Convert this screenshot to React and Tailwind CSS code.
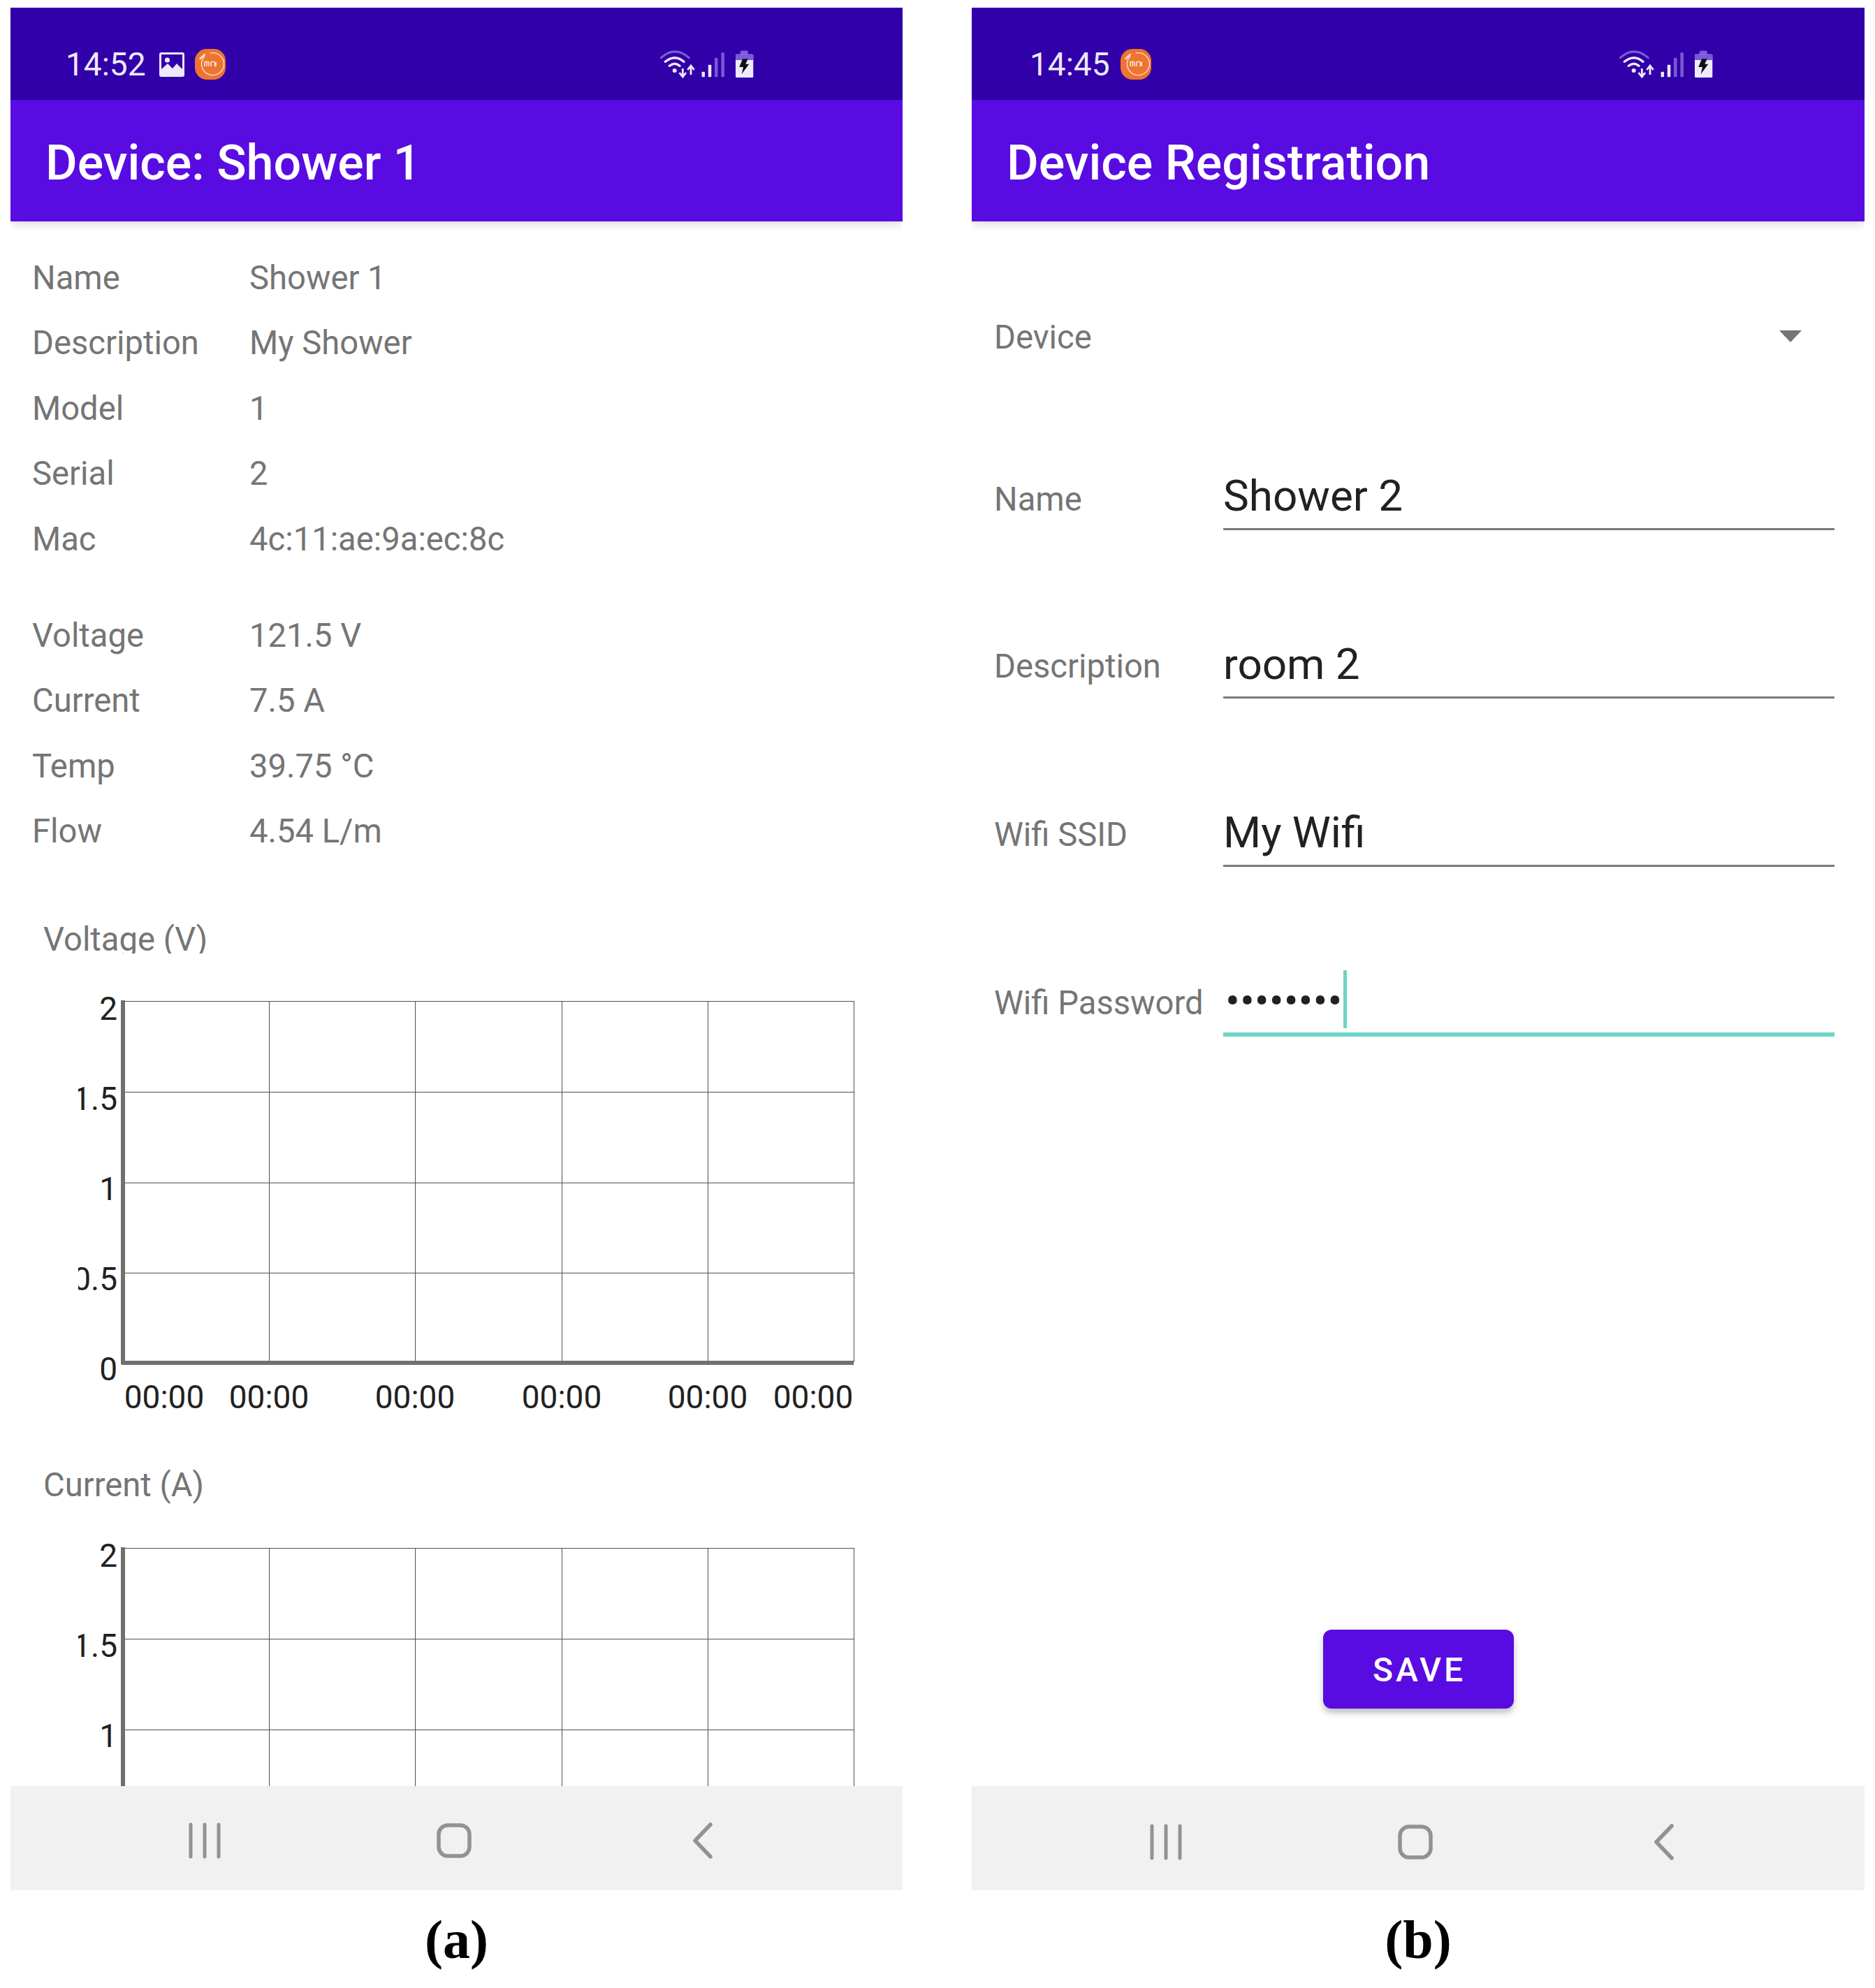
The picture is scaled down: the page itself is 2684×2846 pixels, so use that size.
const font = { fontFamily: "Roboto, sans-serif" };

function ImageIcon() {
  return (
    <svg width="36" height="35" viewBox="0 0 36 35" className="ml-[19px] shrink-0">
      <rect x="0" y="0" width="36" height="35" rx="3" fill="#eee8fb" />
      <rect x="3" y="3" width="30" height="29" fill="#3100a8" />
      <circle cx="11.5" cy="11" r="3.6" fill="#eee8fb" />
      <path d="M3 32 V24 L12 16 L19 23 L25 16 L33 24 V32 Z" fill="#eee8fb" />
    </svg>
  );
}

function MiIcon({ className }) {
  return (
    <svg width="44" height="44" viewBox="0 0 44 44" className={className}>
      <rect x="0" y="0" width="44" height="44" rx="17" fill="#ee7530" />
      <path d="M14 10.5 A16 16 0 1 0 22 6" fill="none" stroke="#fbe3d3" strokeWidth="1.3" />
      <path d="M7.5 14 L14 8" stroke="#fbe3d3" strokeWidth="2.4" strokeLinecap="round" />
      <path d="M15 26 V19.5 H20 Q21 19.5 21 21 V26 M18 20 V26 M24 19.5 H28 Q29.5 19.5 29.5 21 V26 M24 19.5 V26 M31 19.5 V26" transform="translate(-1 -1)" fill="none" stroke="#fbe3d3" strokeWidth="1.6" />
    </svg>
  );
}

function StatusRight() {
  const light = "#efe9fb";
  const dim = "#7a5ad8";
  return (
    <svg width="134" height="40" viewBox="0 -1 134 40" className="shrink-0">
      <path d="M1.3 9.7 Q21 -8 41.3 9.7" fill="none" stroke={dim} strokeWidth="3" strokeLinecap="round" />
      <path d="M7.3 15.3 Q21 4 34 15.3" fill="none" stroke={light} strokeWidth="3.4" strokeLinecap="round" />
      <path d="M13.3 21.3 Q21 15 28 21.3" fill="none" stroke={light} strokeWidth="3.4" strokeLinecap="round" />
      <circle cx="20.7" cy="28" r="3" fill={light} />
      <path d="M32.3 25 V35 M27.5 31 L32.3 37 L37 31" fill="none" stroke={light} strokeWidth="2.8" />
      <path d="M44 34 V22 M39.3 27 L44 21 L48.7 27" fill="none" stroke={light} strokeWidth="2.8" />
      <rect x="59.5" y="29.7" width="4.5" height="7.6" rx="1" fill={light} />
      <rect x="68.8" y="19.7" width="4.5" height="17.6" rx="1" fill={light} />
      <rect x="78" y="9.7" width="4.5" height="27.6" rx="1" fill={dim} />
      <rect x="87.4" y="2.3" width="4.5" height="35" rx="1" fill={dim} />
      <rect x="114.7" y="-0.5" width="11" height="6" rx="1.5" fill={dim} />
      <rect x="108" y="4.7" width="25.3" height="33.3" rx="1.5" fill={light} />
      <path d="M108 13 V6 Q108 4.7 109.5 4.7 H131.8 Q133.3 4.7 133.3 6 V13 Z" fill={dim} />
      <path d="M118 11.3 H125.7 L122.3 18.7 H127.3 L116.7 33 L119 23 H113.3 Z" fill="#111" />
    </svg>
  );
}

function StatusBar({ time, pl, pr, micon, image }) {
  return (
    <div className={`h-[132px] pt-[30px] bg-[#3100a8] flex items-center shrink-0 ${pl} ${pr}`}>
      <span className="text-[46px] leading-none text-[#eee8fb]" style={font}>{time}</span>
      {image && <ImageIcon />}
      <MiIcon className={`shrink-0 ${micon}`} />
      <div className="ml-auto"><StatusRight /></div>
    </div>
  );
}

function AppBar({ title, pl }) {
  return (
    <div className={`relative z-10 h-[174px] pt-[6px] shrink-0 bg-[#590ce1] flex items-center shadow-[0_4px_12px_rgba(0,0,0,0.14)] ${pl}`}>
      <h1 className="text-[70px] leading-none font-medium text-white" style={font}>{title}</h1>
    </div>
  );
}

function NavBar({ pt }) {
  return (
    <div className={`relative z-10 h-[149px] shrink-0 bg-[#f1f1f1] flex items-start pl-[248px] gap-[297px] ${pt}`}>
      <svg width="60" height="52" viewBox="0 0 60 52">
        <path d="M10 3 V49 M30 3 V49 M50 3 V49" stroke="#929292" strokeWidth="5" strokeLinecap="round" fill="none" />
      </svg>
      <svg width="60" height="52" viewBox="0 0 60 52">
        <rect x="8" y="4" width="44" height="44" rx="13" fill="none" stroke="#929292" strokeWidth="5.5" />
      </svg>
      <svg width="60" height="52" viewBox="0 0 60 52">
        <path d="M42 3 L20 26 L42 49" transform="translate(-2 0)" stroke="#929292" strokeWidth="5.5" strokeLinecap="round" strokeLinejoin="round" fill="none" />
      </svg>
    </div>
  );
}

function Chart({ className }) {
  const xs = [64, 273, 482, 692, 901, 1110];
  const ys = [13, 143, 273, 402, 530];
  const ylab = [["2", 40], ["1.5", 169], ["1", 298], ["0.5", 427], ["0", 556]];
  const xlab = [123, 273, 482, 692, 901, 1052];
  return (
    <svg width="1150" height="620" viewBox="0 0 1150 620" className={`block shrink-0 ml-[97px] ${className}`} style={font}>
      {ys.map((y) => <line key={y} x1="64" x2="1110" y1={y + 0.5} y2={y + 0.5} stroke="#4f4f4f" strokeWidth="1" />)}
      {xs.slice(1).map((x) => <line key={x} x1={x + 0.5} x2={x + 0.5} y1="13" y2="530" stroke="#4f4f4f" strokeWidth="1" />)}
      <line x1="64" x2="64" y1="12" y2="533" stroke="#707070" strokeWidth="6" />
      <line x1="62" x2="1110" y1="531" y2="531" stroke="#707070" strokeWidth="6" />
      {ylab.map(([t, y]) => <text key={t} x="56" y={y} textAnchor="end" fontSize="46" fill="#212121">{t}</text>)}
      {xlab.map((x, i) => <text key={i} x={x} y="596" textAnchor="middle" fontSize="46" fill="#212121">00:00</text>)}
    </svg>
  );
}

const infoA = [["Name", "Shower 1"], ["Description", "My Shower"], ["Model", "1"], ["Serial", "2"], ["Mac", "4c:11:ae:9a:ec:8c"]];
const infoB = [["Voltage", "121.5 V"], ["Current", "7.5 A"], ["Temp", "39.75 °C"], ["Flow", "4.54 L/m"]];

function InfoRows({ rows, className }) {
  return (
    <div className={className}>
      {rows.map(([k, v]) => (
        <div key={k} className="h-[93.4px] flex items-center pl-[31px] text-[47.2px] leading-none text-[#757575]" style={font}>
          <span className="w-[311px] shrink-0">{k}</span>
          <span>{v}</span>
        </div>
      ))}
    </div>
  );
}

function DetailScreen() {
  return (
    <div className="flex-1 min-h-0 overflow-hidden bg-white">
      <InfoRows rows={infoA} className="mt-[35px]" />
      <InfoRows rows={infoB} className="mt-[45px]" />
      <div className="mt-[77px] h-[50px] overflow-hidden pl-[47px] text-[47.2px] leading-[60px] text-[#757575]" style={font}>Voltage (V)</div>
      <Chart className="mt-[55px]" />
      <div className="mt-[56px] h-[60px] pl-[47px] text-[47.2px] leading-[60px] text-[#757575]" style={font}>Current (A)</div>
      <Chart className="mt-[47px]" />
    </div>
  );
}

function Field({ label, value, className, labelPad }) {
  return (
    <div className={`h-[100px] flex ${className}`} style={font}>
      <div className={`w-[328px] shrink-0 flex items-center text-[47.2px] leading-none text-[#757575] ${labelPad}`}>{label}</div>
      <div className="flex-1 border-b-[3px] border-[#7a7a7a] pt-[5px] flex items-center text-[62px] leading-none text-[#212121]">{value}</div>
    </div>
  );
}

function FormScreen() {
  return (
    <div className="flex-1 min-h-0 overflow-hidden bg-white flex flex-col pl-[32px] pr-[43px]" style={font}>
      <div className="mt-[100px] h-[132px] pt-[2px] flex items-center justify-between text-[47.2px] leading-none text-[#757575]">
        <span>Device</span>
        <svg width="32" height="18" viewBox="0 0 32 18" className="mr-[47px] -mt-[4px]"><path d="M0 0 H32 L16 17 Z" fill="#757575" /></svg>
      </div>
      <Field label="Name" value="Shower 2" className="mt-[110px]" labelPad="pt-[13px]" />
      <Field label="Description" value="room 2" className="mt-[141px]" labelPad="pt-[10px]" />
      <Field label="Wifi SSID" value="My Wifi" className="mt-[141px]" labelPad="pt-[10px]" />
      <div className="mt-[141px] h-[102px] flex">
        <div className="w-[328px] shrink-0 pt-[8px] flex items-center text-[47.2px] leading-none text-[#757575]">Wifi Password</div>
        <div className="flex-1 border-b-[6px] border-[#6cd6c6] flex items-center pl-[3px]">
          <span className="mt-[6px] text-[62px] leading-none text-[#212121]">••••••••</span>
          <span className="w-[5px] h-[83px] ml-[2px] bg-[#6cd6c6]" />
        </div>
      </div>
      <button className="mt-[849px] ml-[11px] self-center w-[273px] h-[113px] pt-[3px] pl-[3px] rounded-[12px] bg-[#590ce1] text-white text-[48px] font-medium tracking-[4px] shadow-[0_6px_10px_rgba(0,0,0,0.25)]">SAVE</button>
    </div>
  );
}

function Caption({ children }) {
  return (
    <div className="h-[140px] flex items-center justify-center text-[78px] font-bold text-black" style={{ fontFamily: "'Liberation Serif', serif" }}>
      {children}
    </div>
  );
}

export default function App() {
  return (
    <div className="w-[2684px] h-[2846px] bg-white flex gap-[99px] pt-[11px] pl-[15px] overflow-hidden">
      <div className="w-[1277px] shrink-0 flex flex-col">
        <div className="h-[2695px] flex flex-col overflow-hidden">
          <StatusBar time="14:52" pl="pl-[79px]" pr="pr-[213px]" micon="ml-[15px]" image />
          <AppBar title="Device: Shower 1" pl="pl-[50px]" />
          <DetailScreen />
          <NavBar pt="pt-[52px]" />
        </div>
        <Caption>(a)</Caption>
      </div>
      <div className="w-[1278px] shrink-0 flex flex-col">
        <div className="h-[2695px] flex flex-col overflow-hidden">
          <StatusBar time="14:45" pl="pl-[83px]" pr="pr-[217px]" micon="ml-[15px]" />
          <AppBar title="Device Registration" pl="pl-[50px]" />
          <FormScreen />
          <NavBar pt="pt-[54px]" />
        </div>
        <Caption>(b)</Caption>
      </div>
    </div>
  );
}
